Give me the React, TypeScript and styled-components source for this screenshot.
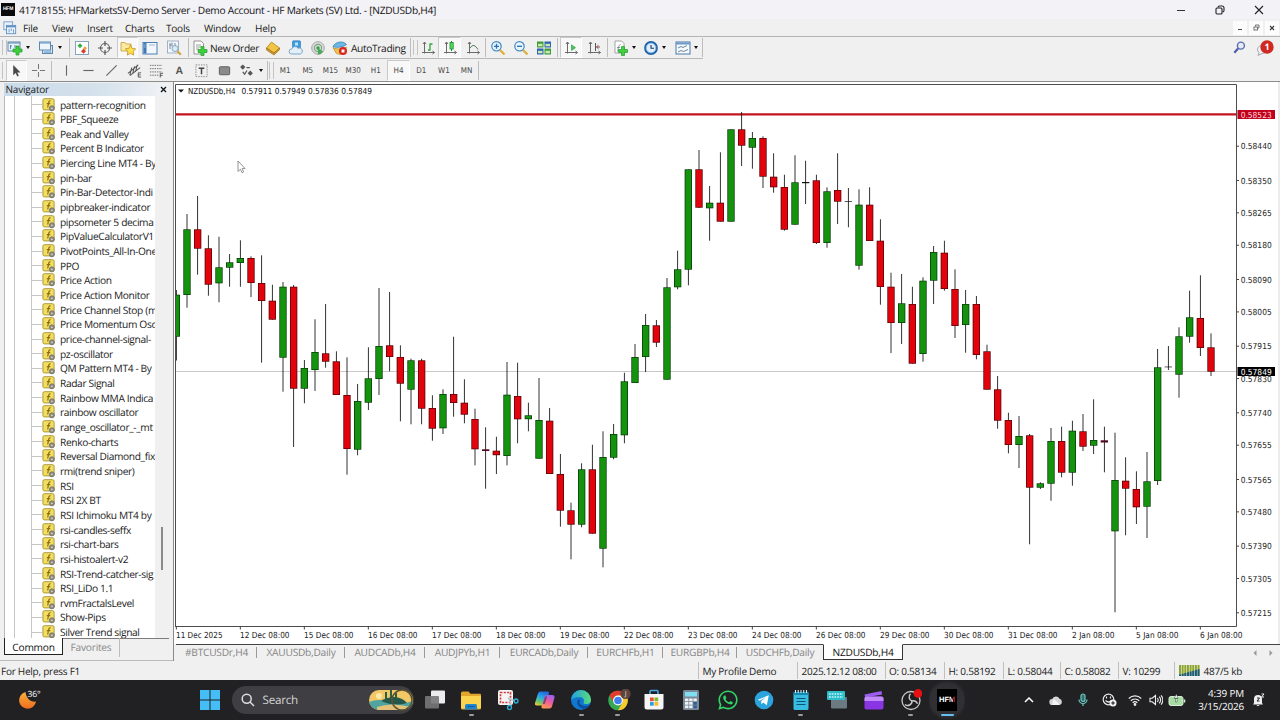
import React from "react";
import styled, { createGlobalStyle, css } from "styled-components";
import { FaWhatsapp } from "react-icons/fa";

const UI = `"Open Sans", "Noto Sans", sans-serif`;
const TAHOMA = `"DejaVu Sans Condensed", "DejaVu Sans", sans-serif`;

const GlobalStyle = createGlobalStyle`
  html, body { margin: 0; padding: 0; background: #f0f0f0; }
  * { box-sizing: border-box; }
  svg { display: block; flex: none; }
`;

const Screen = styled.div`
  width: 1280px;
  height: 720px;
  display: flex;
  flex-direction: column;
  overflow: hidden;
  background: #f0f0f0;
  font-family: ${UI};
  font-size: 10px;
  letter-spacing: -0.2px;
  text-rendering: geometricPrecision;
  color: #1a1a1a;
  white-space: nowrap;
`;

/* ---------- title and menu ---------- */

const TitleBar = styled.header`
  height: 19px;
  display: flex;
  align-items: center;
  background: #f3f2f6;
  padding: 0 16.5px 0 1px;
`;
const TitleLogo = styled.div`
  width: 14px;
  height: 13px;
  background: #0b0b0b;
  color: #fff;
  font: bold 5px/13px "Liberation Sans", sans-serif;
  text-align: center;
  margin-right: 4px;
`;
const TitleText = styled.div`
  flex: 1;
  font-size: 10.2px;
  letter-spacing: -0.27px;
  color: #111;
`;
const WindowButtons = styled.div`
  display: flex;
  gap: 29px;
`;
const MenuBar = styled.nav`
  height: 17px;
  display: flex;
  align-items: center;
  padding-left: 3px;
`;
const MenuItem = styled.div<{ $w: number }>`
  width: ${(p) => p.$w}px;
`;
const MdiButtons = styled.div`
  margin-left: auto;
  display: flex;
  gap: 2px;
  padding-right: 1px;
`;
const MdiButton = styled.div`
  width: 14px;
  height: 14px;
  background: #fcfcfc;
  display: grid;
  place-items: center;
`;

/* ---------- toolbars ---------- */

const ToolbarArea = styled.div`
  height: 46px;
  border-top: 1px solid #b4b4b4;
  border-bottom: 1px solid #8c8c8c;
  display: flex;
  justify-content: space-between;
  padding-right: 5px;
`;
const Toolbar = styled.div<{ $h: number; $bottom?: boolean }>`
  height: ${(p) => p.$h}px;
  display: flex;
  align-items: center;
  width: max-content;
  border-bottom: ${(p) => (p.$bottom ? "1px solid #b8b8b8" : "0")};
`;
const Grip = styled.div`
  width: 6px;
  align-self: stretch;
  padding: 3px 0 3px 1.5px;
  &::before {
    content: "";
    display: block;
    width: 3px;
    height: 100%;
    border-left: 1px solid #c4c4c4;
    border-right: 1px solid #c4c4c4;
  }
`;
const Slot = styled.div<{ $w: number; $active?: boolean }>`
  width: ${(p) => p.$w}px;
  height: 21px;
  display: flex;
  align-items: center;
  justify-content: center;
  ${(p) =>
    p.$active &&
    css`
      background: #f8f8f8;
      border: 1px solid #c9c9c9;
      border-right-color: #fff;
      border-bottom-color: #fff;
    `}
`;
const Sep = styled.div<{ $l: number; $r: number }>`
  width: 1px;
  height: 19px;
  background: #bdbdbd;
  margin: 0 ${(p) => p.$r}px 0 ${(p) => p.$l}px;
`;
const Drop = styled.div<{ $w: number; $r?: number }>`
  width: ${(p) => p.$w}px;
  margin-right: ${(p) => p.$r ?? 0}px;
  display: flex;
  justify-content: center;
  &::before {
    content: "";
    border: 2.5px solid transparent;
    border-top: 3px solid #111;
    border-bottom: 0;
  }
`;
const ToolLabel = styled.div<{ $w: number; $l?: number }>`
  width: ${(p) => p.$w}px;
  padding-left: ${(p) => p.$l ?? 0}px;
  font-size: 10.2px;
  letter-spacing: -0.35px;
`;
const Period = styled(Slot)`
  font: 8px ${TAHOMA};
  letter-spacing: 0;
  color: #4a4a4a;
`;
const ToolbarRight = styled.div`
  display: flex;
  gap: 8.5px;
  padding-top: 3px;
`;

/* ---------- main area ---------- */

const Main = styled.main`
  height: 579px;
  display: flex;
`;
const Navigator = styled.aside`
  width: 173px;
  display: flex;
  flex-direction: column;
  padding: 1px 4px 0 4px;
  border-bottom: 1px solid #bcbcbc;
`;
const NavHeader = styled.div`
  height: 13px;
  display: flex;
  align-items: center;
  justify-content: space-between;
  padding: 0 2px 0 1.5px;
  background: linear-gradient(90deg, #c9dbe9, #d6e2ec 60%, #eff2f5 96%);
  line-height: 13px;
`;
const NavBody = styled.div`
  height: 543px;
  display: flex;
  background: #fff;
  border-left: 1px solid #b9b9b9;
  border-bottom: 1px solid #7c7c7c;
`;
const Guide = styled.div<{ $w: number }>`
  width: ${(p) => p.$w}px;
  border-right: 1px solid #c6c6c6;
`;
const Tree = styled.ul`
  flex: 1;
  min-width: 0;
  margin: 0;
  padding: 1.2px 0 0;
  list-style: none;
  overflow: hidden;
`;
const TreeRow = styled.li`
  height: 14.667px;
  display: flex;
  align-items: center;
  font-size: 10.2px;
  letter-spacing: -0.36px;
  overflow: hidden;
  &::before {
    content: "";
    flex: none;
    width: 10px;
    border-top: 1px solid #c6c6c6;
  }
  svg { margin-right: 4px; }
`;
const Scroll = styled.div`
  width: 14px;
  flex: none;
  background: #f0f0f0;
  padding: 431px 6px 0 6px;
  &::before {
    content: "";
    display: block;
    width: 2px;
    height: 43px;
    background: #8a8a8a;
  }
`;
const NavTabs = styled.div`
  display: flex;
  height: 17px;
  margin-top: -1px;
`;
const NavTab = styled.div<{ $active?: boolean }>`
  width: ${(p) => (p.$active ? 59 : 56)}px;
  line-height: 18px;
  text-align: center;
  font-size: 10.2px;
  letter-spacing: -0.25px;
  color: #8a8a8a;
  ${(p) =>
    p.$active &&
    css`
      color: #111;
      background: #fff;
      border: 1.5px solid #222;
      border-top: 0;
    `}
`;
const ChartPane = styled.section`
  flex: 1;
  display: flex;
  flex-direction: column;
  border-left: 1px solid #8a8a8a;
`;
const ChartWindow = styled.div`
  height: 562px;
  background: #fff;
  border-right: 2px solid #ececec;
  overflow: hidden;
`;
const ChartTabs = styled.div`
  height: 17px;
  display: flex;
  padding-left: 2px;
  background: #f0f0f0;
  align-items: flex-start;
`;
const ChartTab = styled.div<{ $w: number; $active?: boolean; $last?: boolean }>`
  width: ${(p) => p.$w}px;
  height: 16px;
  line-height: 15px;
  text-align: center;
  font-size: 10.2px;
  color: #858585;
  letter-spacing: -0.25px;
  border-top: 1px solid #444;
  position: relative;
  &::after {
    content: "";
    display: ${(p) => (p.$active || p.$last ? "none" : "block")};
    position: absolute;
    right: 0;
    top: 2px;
    height: 11px;
    border-right: 1px solid #9a9a9a;
  }
  ${(p) =>
    p.$active &&
    css`
      color: #111;
      background: #fff;
      border: 1px solid #333;
      border-top-color: #fff;
    `}
`;
const TabFiller = styled.div`
  flex: 1;
  height: 16px;
  border-top: 1px solid #444;
  display: flex;
  justify-content: flex-end;
  align-items: center;
  gap: 12px;
  padding-right: 7px;
`;

/* ---------- status bar ---------- */

const StatusBar = styled.footer`
  height: 19px;
  display: flex;
  align-items: center;
  color: #222;
  padding-left: 1px;
`;
const StatusCell = styled.div<{ $w: number; $first?: boolean }>`
  width: ${(p) => p.$w}px;
  height: 17px;
  padding-top: 1.5px;
  display: flex;
  align-items: center;
  gap: 4px;
  letter-spacing: -0.25px;
  border-left: ${(p) => (p.$first ? "0" : "1px solid #c0c0c0")};
  padding-left: ${(p) => (p.$first ? 0 : 3.5)}px;
`;

/* ---------- taskbar ---------- */

const Taskbar = styled.div`
  height: 40px;
  background: #212124;
  display: flex;
  align-items: center;
  color: #fff;
`;
const Weather = styled.div`
  width: 192px;
  padding-left: 18px;
`;
const StartButton = styled.div`
  width: 40px;
  display: flex;
  padding-left: 8px;
`;
const SearchBox = styled.div`
  width: 182px;
  height: 28px;
  border-radius: 14px;
  background: #3f3f43;
  display: flex;
  align-items: center;
  padding: 0 1px 0 9px;
  font-size: 11.7px;
  color: #d4d4d4;
  margin-right: 2.5px;
  span { flex: 1; padding-left: 7.5px; letter-spacing: -0.25px; }
`;
const TaskApp = styled.div<{ $active?: boolean; $dot?: boolean }>`
  width: 36.6px;
  height: 40px;
  display: flex;
  flex-direction: column;
  align-items: center;
  justify-content: center;
  padding-top: 5px;
  ${(p) => p.$active && css`background: radial-gradient(circle, #303034 0 60%, #212124 75%);`}
  &::after {
    content: "";
    width: ${(p) => (p.$active ? 13 : 5)}px;
    height: 2px;
    margin-top: 3px;
    border-radius: 1px;
    flex: none;
    background: ${(p) => (p.$active ? "#66bff0" : p.$dot ? "#9b9b9b" : "transparent")};
  }
`;
const HfmTile = styled.div`
  width: 20px;
  height: 22px;
  background: #000;
  font: bold 7.6px/22px "Liberation Sans", sans-serif;
  letter-spacing: -0.1px;
  text-align: center;
  flex: none;
  i { font-style: normal; background: linear-gradient(90deg, #fff 70%, #d81e2c 72%); background-clip: text; color: transparent; }
`;
const Tray = styled.div`
  margin-left: auto;
  display: flex;
  align-items: center;
  padding-right: 15px;
`;
const TraySlot = styled.div<{ $w: number }>`
  width: ${(p) => p.$w}px;
  display: flex;
  justify-content: center;
`;
const Clock = styled.div`
  width: 54px;
  text-align: right;
  font-size: 9.9px;
  letter-spacing: -0.12px;
  line-height: 13.5px;
  margin-right: 8px;
`;

/* ---------- icons ---------- */

const Ico = ({ s = 16, children }: { s?: number; children: React.ReactNode }) => (
  <svg width={s} height={s} viewBox="0 0 16 16" fill="none">
    {children}
  </svg>
);
const Plus = ({ x, y }: { x: number; y: number }) => (
  <path
    d={`M${x + 3} ${y}h3v3h3v3h-3v3h-3v-3h-3v-3h3z`}
    fill="#3fd03f"
    stroke="#1f9a2a"
    strokeWidth=".7"
  />
);
const NewChart = () => (
  <Ico>
    <rect x="1" y="2" width="12" height="9" fill="#eaf3fb" stroke="#5c88ae" />
    <path d="M1 3h12M3.5 5v4M3 6h2M8 5v3" stroke="#5c88ae" strokeWidth="1" />
    <Plus x={6} y={6} />
  </Ico>
);
const Profiles = () => (
  <Ico>
    <rect x="4.5" y="5.5" width="10" height="8" fill="#cfe3f3" stroke="#5c88ae" />
    <rect x="1.5" y="2" width="11" height="8" fill="#eef6fc" stroke="#5c88ae" />
    <path d="M2 3h10M6 12h7" stroke="#5b94c8" />
  </Ico>
);
const MarketWatch = () => (
  <Ico>
    <rect x="1.5" y="1.5" width="13" height="13" fill="#fff" stroke="#86a3bf" />
    <path d="M6 3.200 8.500 5.700 6 8.200 3.500 5.700z" fill="#35b045" />
    <path d="M11 6.300 13 8.300 11 10.300 9 8.300z" fill="#e9a13c" />
    <path d="M9.500 8.700 12 11.200 9.500 13.700 7 11.200z" fill="#dd3a2c" />
  </Ico>
);
const Target = () => (
  <Ico>
    <circle cx="8" cy="8" r="4.500" stroke="#666" strokeWidth="1.200" />
    <path d="M8 1v5M8 10v5M1 8h5M10 8h5" stroke="#555" strokeWidth="1.200" />
  </Ico>
);
const FolderStar = () => (
  <Ico>
    <path d="M1 2.500h4l1 1.500h5v7H1z" fill="#fbe9a0" stroke="#c49a36" strokeWidth=".8" />
    <path
      d="m10.500 5 1.600 3.400 3.600.5-2.600 2.500.6 3.700-3.200-1.800-3.200 1.800.6-3.700L5.300 8.900l3.600-.5z"
      fill="#ffe14a"
      stroke="#bf8f22"
      strokeWidth=".8"
    />
  </Ico>
);
const NavPanel = () => (
  <Ico>
    <rect x="1" y="2.500" width="14" height="11.500" fill="#f1f7fd" stroke="#4a7fb4" />
    <rect x="1.500" y="3" width="3" height="10.500" fill="#3f78b4" />
    <path d="M2.500 5h1M2.500 7h1" stroke="#dfeaf5" />
    <path d="M7 5h6" stroke="#9dbad4" />
  </Ico>
);
const Tester = () => (
  <Ico>
    <rect x="1.500" y="1" width="11" height="12" fill="#f3f7fb" stroke="#9fb2c6" />
    <path d="M4 3v6M6 2.500v4M9 3v4M3.500 5h2" stroke="#6c8296" strokeWidth=".9" />
    <circle cx="9" cy="8.500" r="3" fill="#d6ecfa" stroke="#8aa6bd" />
    <path d="m11.300 11 3.500 3.800" stroke="#d3a33b" strokeWidth="2" />
  </Ico>
);
const OrderIcon = () => (
  <Ico>
    <path d="M2 1h7l2.500 2.500V14H2z" fill="#fff" stroke="#888" strokeWidth=".9" />
    <path d="M4 5h5M4 7h5M4 9h3" stroke="#8a9a8a" strokeWidth=".9" />
    <Plus x={6} y={6.500} />
  </Ico>
);
const Book = () => (
  <Ico>
    <path d="m6.500 2 8 6-5.500 5L1.500 8z" fill="#f1c443" stroke="#b08424" strokeWidth=".8" />
    <path d="m1.500 8 7.500 5 5.500-5v1.800L9 15 1.500 10z" fill="#d79a28" stroke="#8d671a" strokeWidth=".6" />
  </Ico>
);
const CloudUser = () => (
  <Ico>
    <rect x="4.500" y=".8" width="8" height="8" rx="1" fill="#3b9ae0" stroke="#2676b8" strokeWidth=".6" />
    <path d="M7 2.500h3v3H7z" fill="#bfe2f8" />
    <path
      d="M3.500 14a2.500 2.500 0 0 1 .2-5 3.500 3.500 0 0 1 6.300-.8 3 3 0 0 1 2.500 5.800z"
      fill="#e4eef7"
      stroke="#6f9dc4"
      strokeWidth=".9"
    />
  </Ico>
);
const Signal = () => (
  <Ico>
    <circle cx="8" cy="8" r="6.300" fill="#dcdcdc" stroke="#a2a8a2" />
    <circle cx="8" cy="8" r="3.600" stroke="#7fa486" strokeWidth="1.200" />
    <circle cx="8" cy="8" r="1.700" fill="#2f9c46" />
    <path d="M8 8v6.500a6.500 6.500 0 0 0 5-3z" fill="#43ab55" />
  </Ico>
);
const AutoTrade = () => (
  <Ico>
    <path d="M1 7.500c3 2 11 2 13.500-.5L12 12.500c-3 2.500-6 2-8 .5z" fill="#f0c54c" stroke="#b6892a" strokeWidth=".7" />
    <path d="M1 6.500C3 2 11 0 14.500 4.500 11 7.500 4 8 1 6.500z" fill="#6cb8e6" stroke="#2e78ae" strokeWidth=".7" />
    <circle cx="11" cy="11" r="4" fill="#d8261f" />
    <rect x="9.500" y="9.500" width="3" height="3" fill="#fff" />
  </Ico>
);
const axes = "M4.500 2v11.500M2 12.500h12.500M3 4l1.500-2L6 4M12.500 11l2 1.500-2 1.500";
const BarsIcon = () => (
  <Ico>
    <path d={axes} stroke="#6a6a6a" />
    <path d="M10 3.500v7M10 4h2.500M8 10h2" stroke="#2fa53c" strokeWidth="1.300" />
  </Ico>
);
const CandleIcon = () => (
  <Ico>
    <path d={axes} stroke="#6a6a6a" />
    <path d="M9.500 1v10" stroke="#1e8c2c" />
    <rect x="8" y="2.500" width="3.200" height="6.500" fill="#4edb5c" stroke="#1e8c2c" strokeWidth=".8" />
  </Ico>
);
const LineIcon = () => (
  <Ico>
    <path d={axes} stroke="#6a6a6a" />
    <path d="M5 8c3-4 5-3 8 1.500" stroke="#4f7d5a" />
  </Ico>
);
const Zoom = ({ plus }: { plus?: boolean }) => (
  <Ico>
    <path d="m10 10 4.500 4.500" stroke="#dcb13f" strokeWidth="2.400" />
    <circle cx="6.500" cy="6.300" r="4.700" fill="#e6f4fd" stroke="#3f86c2" strokeWidth="1.200" />
    <path d={plus ? "M4 6.300h5M6.500 3.800v5" : "M4 6.300h5"} stroke="#2b6fb0" strokeWidth="1.300" />
  </Ico>
);
const Tiles = () => (
  <Ico>
    {[
      [1, 1.5, "#3f9b3a"],
      [8.5, 1.5, "#2b63b0"],
      [1, 8.5, "#2b63b0"],
      [8.5, 8.5, "#3f9b3a"],
    ].map(([x, y, c]) => (
      <g key={`${x}${y}`}>
        <rect x={x} y={y} width="6.500" height="6" fill={c as string} />
        <rect x={Number(x) + 1} y={Number(y) + 2.3} width="4.500" height="2.500" fill="#c6ecae" />
      </g>
    ))}
  </Ico>
);
const Scroller = () => (
  <Ico>
    <path d={axes} stroke="#6a6a6a" />
    <path d="m8.500 4.800 4 2.900-4 2.800z" fill="#49c455" stroke="#269a35" strokeWidth=".6" />
  </Ico>
);
const Shift = () => (
  <Ico>
    <path d={axes} stroke="#6a6a6a" />
    <path d="M9.500 3v8" stroke="#555" />
    <path d="M14 7h-3.500M12.500 5.200 10.500 7l2 1.800" stroke="#8a4a44" />
  </Ico>
);
const Indicators = () => (
  <Ico>
    <path d="M3 1h6.500L12 3.500V13H3z" fill="#fff" stroke="#999" strokeWidth=".9" />
    <path d="M5 11.500c1.500 0 1-7 3.500-7M5 7.500h3" stroke="#789" strokeWidth=".9" />
    <Plus x={6.500} y={6.500} />
  </Ico>
);
const ClockIcon = () => (
  <Ico>
    <circle cx="8" cy="8" r="6.900" fill="#1f5fa8" />
    <circle cx="8" cy="8" r="4.900" fill="#dff0fc" stroke="#6ab0e4" strokeWidth=".8" />
    <path d="M8 5v3.200h3" stroke="#234" strokeWidth="1.100" />
  </Ico>
);
const Template = () => (
  <Ico>
    <rect x="1" y="2" width="14" height="12" fill="#f7fbff" stroke="#4a79a6" />
    <path d="M1 3.500h14" stroke="#6a9acb" strokeWidth="2" />
    <path d="m3 8 3-1.500 2 1 4-2M3 12l3-1.500 2.500 1L13 9.500" stroke="#57788f" strokeWidth=".9" />
  </Ico>
);
const Cursor = () => (
  <Ico s={15}>
    <path d="M4.500 2v11l2.600-2.400 1.700 3.700 1.700-.8-1.700-3.500h3.500z" fill="#4a4a4a" />
  </Ico>
);
const CrossHair = () => (
  <Ico s={15}>
    <path d="M8 1v5.500M8 9.500V15M1 8h5.500M9.500 8H15" stroke="#777" strokeWidth="1.100" />
  </Ico>
);
const Stroke = ({ d }: { d: string }) => (
  <Ico s={15}>
    <path d={d} stroke="#666" strokeWidth="1.200" />
  </Ico>
);
const Channel = () => (
  <Ico s={15}>
    <path d="M1 11 12 2M3 13.500 14 5M5 5l-2 8M8 3.500l-2 8M11 2l-2 7.500" stroke="#555" strokeWidth="1.100" />
    <path d="M15 10.500h-3v4.500h3M12 12.700h2.500" stroke="#444" strokeWidth=".9" />
  </Ico>
);
const Fibo = () => (
  <Ico s={15}>
    <path d="M1 2.500h13M1 6h13M1 9.500h13M1 13h9" stroke="#666" strokeDasharray="1.500 1" />
    <path d="M15 11h-3v4.500M12 13.200h2.500" stroke="#444" strokeWidth=".9" />
  </Ico>
);
const TextTool = styled.b`
  font: bold 10.5px "Liberation Sans", sans-serif;
  color: #555;
`;
const LabelTool = () => (
  <Ico s={15}>
    <rect x="2" y="2" width="12" height="12.500" stroke="#888" strokeDasharray="1.500 1.200" />
    <path d="M5 5.500h6M8 5.500V12" stroke="#444" strokeWidth="1.600" />
  </Ico>
);
const BoxTool = () => (
  <Ico s={15}>
    <rect x="2.500" y="4" width="11" height="8.500" rx="1" fill="#8a8a8a" stroke="#5a5a5a" />
  </Ico>
);
const ArrowsTool = () => (
  <Ico s={15}>
    <path d="m4 1.500 2.800 2.800L4 7.200 1.200 4.300z" fill="#555" />
    <path d="m12 8 2.800 2.800L12 13.600l-2.800-2.800z" fill="#555" />
    <path d="m4 9.500 2 2.500 2.500-4M8 5h3.500" stroke="#555" strokeWidth="1.300" />
  </Ico>
);
const ScriptIcon = () => (
  <svg width="14" height="14" viewBox="0 0 14 14">
    <rect x=".9" y=".7" width="11.200" height="11.200" rx="1.500" fill="#f2de62" stroke="#a58f2c" strokeWidth=".9" />
    <path d="M8.600 2.800C7 2.400 6.800 4 6.500 5.500L5.700 9.500M4.800 5.600h3.500" stroke="#8a6d10" strokeWidth="1.200" fill="none" />
    <circle cx="9.900" cy="10.300" r="2.600" fill="#8d8a80" stroke="#6c6a62" strokeWidth=".6" />
    <circle cx="9.900" cy="10.300" r=".9" fill="#d8d4c0" />
  </svg>
);

/* ---------- chart data: [direction, high, open/close top, open/close bottom, low] ---------- */

type Candle = [string, number, number, number, number];
const CANDLES: Candle[] = [
  ["g", 290, 294.7, 336.7, 360.5], ["g", 214, 229.3, 295, 307.7], ["r", 196, 229.3, 248.7, 274.7],
  ["r", 235.3, 248.3, 284.7, 295.7], ["g", 236.7, 267.3, 283.3, 302.3], ["g", 254, 262.3, 267.7, 286.7],
  ["g", 240.3, 258, 263, 286.7], ["r", 256.3, 258, 283, 297], ["r", 255.3, 283, 301, 362.7],
  ["r", 284.7, 300.7, 319.7, 319.7], ["g", 282, 286.7, 357.7, 391.7], ["r", 285, 286.7, 388.7, 447],
  ["g", 360, 368, 388.7, 403.3], ["g", 319.3, 352, 370, 391], ["r", 304, 353.3, 361.7, 367.7],
  ["r", 351.3, 361.3, 395, 395], ["r", 357.3, 395, 449, 474.7], ["g", 384, 401, 449.7, 455.3],
  ["g", 347.3, 378.3, 402.7, 410], ["g", 288, 346, 379, 395], ["r", 292, 345.3, 357, 371.3],
  ["r", 345.3, 357, 383.7, 421.3], ["g", 358.7, 360.3, 389.7, 424.3], ["r", 358.7, 360.3, 408.7, 424.3],
  ["r", 395.3, 408, 428.7, 440.7], ["g", 389.3, 394, 428.3, 434], ["r", 336.7, 394, 403, 416.7],
  ["r", 379.3, 402.7, 414.7, 423.3], ["r", 408.7, 419, 449.3, 465.3], ["d", 427.3, 449.3, 451, 488.7],
  ["r", 436.7, 450.7, 455.2, 474], ["g", 362, 394.7, 456, 465.3], ["r", 362.7, 396, 419.3, 443.3],
  ["g", 402.7, 415.3, 419.2, 431.3], ["g", 378, 420, 458.7, 458.7], ["r", 408, 420.7, 474, 474],
  ["r", 454, 474, 510.7, 526.7], ["r", 502.7, 510.3, 524.7, 559.3], ["g", 463.3, 469.3, 524.7, 527.3],
  ["r", 444.7, 469.3, 533.7, 533.7], ["g", 431.3, 457, 548.7, 567.3], ["g", 424, 434, 457.7, 459.3],
  ["g", 372.7, 381.3, 435.3, 443.3], ["g", 344, 357, 383, 383], ["g", 314, 325, 357, 372],
  ["r", 320, 325.3, 342.7, 347], ["g", 278, 287.3, 379.7, 379.7], ["g", 250.7, 269.3, 287.3, 289.3],
  ["g", 169.3, 169.3, 269.7, 285.3], ["r", 150, 169.3, 207.7, 208], ["g", 186, 202.7, 208.3, 240.7],
  ["r", 152.3, 202.7, 221.7, 221.7], ["g", 129.3, 129.3, 221.7, 221.7], ["r", 112, 129.3, 145.7, 166],
  ["g", 132, 138, 147.7, 168.7], ["r", 136.3, 138, 176.7, 188], ["r", 153.3, 176.7, 187.3, 192.7],
  ["r", 174.7, 187, 229.7, 230.7], ["g", 155.3, 182.3, 224.7, 224.7], ["k", 160.7, 182, 183.2, 204],
  ["r", 174.7, 180.3, 243, 244], ["g", 187.3, 191.3, 243, 247.7], ["r", 153.3, 190, 201.7, 224],
  ["k", 188, 201.2, 201.9, 227.3], ["g", 189.3, 204.7, 265.7, 269.7], ["r", 187.3, 204.7, 241, 241],
  ["r", 219.3, 240.7, 287, 304.7], ["r", 272.7, 286.7, 323, 353], ["g", 274, 303.3, 323, 344],
  ["r", 286.7, 304, 363.7, 363.7], ["g", 277.3, 280.7, 354, 361.7], ["g", 246, 252, 280.7, 304],
  ["r", 240.7, 252.7, 289, 290.7], ["r", 269.3, 289, 326, 338], ["g", 290, 304, 325, 352.7],
  ["r", 296, 304, 355, 359.3], ["r", 344.7, 351.3, 389.7, 389.7], ["r", 376, 389.3, 420.7, 428.7],
  ["r", 412.7, 420, 445, 453.3], ["g", 416, 436, 445, 468], ["r", 434, 435.3, 487.7, 544.3],
  ["g", 482.3, 483.3, 487.7, 489], ["g", 428, 441, 483.7, 500.7], ["r", 426.7, 441, 472.7, 477.3],
  ["g", 420.7, 430.7, 472.7, 485.7], ["r", 414, 431.3, 446.7, 451], ["g", 399.3, 440, 445.7, 454],
  ["d", 426.7, 440.3, 442.5, 472.3], ["g", 432.7, 480, 531.3, 612.3], ["r", 457.3, 480.7, 488.7, 535.3],
  ["r", 471.3, 489, 507.3, 524], ["g", 452, 481.3, 506.7, 538], ["g", 349, 367.3, 481, 485],
  ["k", 346, 366.6, 367.3, 370], ["g", 327.3, 336.3, 374.7, 397.7], ["g", 290.7, 317.3, 336.7, 342.7],
  ["r", 275.3, 318, 348, 356], ["r", 333.3, 347.3, 371.7, 376],
];
const FILL: Record<string, string> = { g: "#15930f", r: "#e1040c" };
const EDGE: Record<string, string> = { g: "#063f06", r: "#5c0206", d: "#4d0820", k: "#111" };

const PRICES = [
  "0.58440", "0.58350", "0.58265", "0.58180", "0.58090", "0.58005", "0.57915", "0.57830",
  "0.57740", "0.57655", "0.57565", "0.57480", "0.57390", "0.57305", "0.57215",
];
const DATES = [
  "11 Dec 2025", "12 Dec 08:00", "15 Dec 08:00", "16 Dec 08:00", "17 Dec 08:00", "18 Dec 08:00",
  "19 Dec 08:00", "22 Dec 08:00", "23 Dec 08:00", "24 Dec 08:00", "26 Dec 08:00", "29 Dec 08:00",
  "30 Dec 08:00", "31 Dec 08:00", "2 Jan 08:00", "5 Jan 08:00", "6 Jan 08:00",
];
const priceY = (p: number) => 146.2 + ((0.5844 - p) / 0.01225) * 466.6;

const ChartText = styled.text`
  font-family: ${TAHOMA};
  font-size: 8.4px;
  letter-spacing: 0;
`;

const PriceChart = () => (
  <svg width="1104" height="562" viewBox="174 82 1104 562">
    <path d="M175.500 627V84.500H1236.500V626.500H175.500" fill="none" stroke="#4c4c4c" />
    <path d="M176 371.500H1236" stroke="#c8c8c8" />
    <path d="M176 114.400H1236" stroke="#c41420" strokeWidth="2.200" />
    <clipPath id="plot">
      <rect x="176" y="85" width="1060" height="541" />
    </clipPath>
    <g clipPath="url(#plot)">
      {CANDLES.map(([kind, high, top, bottom, low], i) => {
        const x = 176.33 + i * 10.6667;
        return (
          <g key={i}>
            <rect x={x - 0.4} y={high} width="0.8" height={low - high} fill="#000" />
            <rect x={x - 3.67} y={top} width="7.33" height={bottom - top} fill={EDGE[kind]} />
            {FILL[kind] && (
              <rect x={x - 2.9} y={top + 0.75} width="5.8" height={bottom - top - 1.5} fill={FILL[kind]} />
            )}
          </g>
        );
      })}
    </g>
    <path d="M178 89.500h6l-3 3z" fill="#111" />
    <ChartText x="188" y="94" textLength="47.500" lengthAdjust="spacingAndGlyphs" fill="#111">NZDUSDb,H4</ChartText>
    <ChartText x="241.500" y="94" textLength="130.500" lengthAdjust="spacingAndGlyphs" fill="#111">
      0.57911 0.57949 0.57836 0.57849
    </ChartText>
    {PRICES.map((p) => (
      <g key={p}>
        <path d={`M1237 ${priceY(+p)}h2`} stroke="#444" />
        <ChartText x="1240.700" y={priceY(+p) + 3.1} textLength="31" lengthAdjust="spacingAndGlyphs" fill="#222">{p}</ChartText>
      </g>
    ))}
    <rect x="1237.500" y="110" width="37.500" height="9" fill="#c2001c" />
    <ChartText x="1240.700" y="117.600" textLength="31" lengthAdjust="spacingAndGlyphs" fill="#fbd5d8">0.58523</ChartText>
    <rect x="1237.500" y="367" width="37.500" height="9" fill="#000" />
    <ChartText x="1240.700" y="374.700" textLength="31" lengthAdjust="spacingAndGlyphs" fill="#fff">0.57849</ChartText>
    {DATES.map((d, i) => {
      const x = 176.33 + i * 64;
      return (
        <g key={d}>
          <path d={`M${x} 627v2.500`} stroke="#444" />
          <ChartText
            x={x - 0.3}
            y="637.500"
            textLength={i === 0 ? 46.5 : d.length === 12 ? 49.5 : 42.5}
            lengthAdjust="spacingAndGlyphs"
            fill="#222"
          >
            {d}
          </ChartText>
        </g>
      );
    })}
    <path d="M238 161v10.500l2.400-2.200 1.600 3.400 1.600-.8-1.500-3.300h3z" fill="#fff" stroke="#777" strokeWidth=".8" />
  </svg>
);

const INDICATORS = [
  "pattern-recognition", "PBF_Squeeze", "Peak and Valley", "Percent B Indicator",
  "Piercing Line MT4 - By", "pin-bar", "Pin-Bar-Detector-Indi", "pipbreaker-indicator",
  "pipsometer 5 decima", "PipValueCalculatorV1", "PivotPoints_All-In-One", "PPO", "Price Action",
  "Price Action Monitor", "Price Channel Stop (m", "Price Momentum Osc",
  "price-channel-signal-", "pz-oscillator", "QM Pattern MT4 - By", "Radar Signal",
  "Rainbow MMA Indica", "rainbow oscillator", "range_oscillator_-_mt", "Renko-charts",
  "Reversal Diamond_fix", "rmi(trend sniper)", "RSI", "RSI 2X BT", "RSI Ichimoku MT4 by",
  "rsi-candles-seffx", "rsi-chart-bars", "rsi-histoalert-v2", "RSI-Trend-catcher-sig",
  "RSI_LiDo 1.1", "rvmFractalsLevel", "Show-Pips", "Silver Trend signal",
];
const MENUS: [string, number][] = [
  ["File", 29], ["View", 35], ["Insert", 38], ["Charts", 41], ["Tools", 38], ["Window", 51], ["Help", 40],
];
const TABS: [string, number][] = [
  ["#BTCUSDr,H4", 81], ["XAUUSDb,Daily", 88], ["AUDCADb,H4", 80], ["AUDJPYb,H1", 75],
  ["EURCADb,Daily", 88], ["EURCHFb,H1", 75], ["EURGBPb,H4", 74], ["USDCHFb,Daily", 86],
];
const STATUS: [string, number][] = [
  ["My Profile Demo", 99], ["2025.12.12 08:00", 87.500], ["O: 0.58134", 59.500], ["H: 0.58192", 59],
  ["L: 0.58044", 57], ["C: 0.58082", 58], ["V: 10299", 56],
];
const PERIODS = ["M1", "M5", "M15", "M30", "H1", "H4", "D1", "W1", "MN"];

/* ---------- taskbar drawings ---------- */

const T = ({ children }: { children: React.ReactNode }) => (
  <svg width="22" height="22" viewBox="0 0 22 22" fill="none">
    {children}
  </svg>
);
const TaskView = () => (
  <T>
    <rect x="7" y="1.500" width="14" height="13" rx="1" fill="#ececec" />
    <rect x="1" y="7" width="14" height="12.500" rx="1" fill="#77777a" opacity=".9" />
  </T>
);
const Explorer = () => (
  <T>
    <path d="M1 4q0-1.500 1.500-1.500h6l2 2.200H20q1 0 1 1V19q0 1.500-1.500 1.500h-17Q1 20.500 1 19z" fill="#e2a42b" />
    <path d="M1 7h20v11.500q0 1-1 1H2q-1 0-1-1z" fill="#fbd34e" />
    <path d="M5 20.500v-4q0-1.500 1.500-1.500h9q1.500 0 1.500 1.500v4z" fill="#1f86cf" />
    <path d="M7.500 17.500h7" stroke="#0d5ba0" strokeWidth="1.200" />
  </T>
);
const Snip = () => (
  <T>
    <rect x="1" y="1" width="15" height="15" rx="2" fill="#f4f4f4" />
    <rect x="3.500" y="3.500" width="10" height="10" stroke="#d13a3a" strokeWidth="1.700" strokeDasharray="2 1.300" />
    <path d="m11 9 7 3M12 9l2 8" stroke="#b9c7d0" strokeWidth="1.500" />
    <circle cx="19" cy="12" r="2" stroke="#2db0d8" strokeWidth="1.300" />
    <circle cx="12.500" cy="18.500" r="2" stroke="#2db0d8" strokeWidth="1.300" />
  </T>
);
const Copilot = () => (
  <T>
    <defs>
      <linearGradient id="cpa" x1="0.6" y1="0" x2="0.2" y2="1">
        <stop offset="0" stopColor="#2468e0" />
        <stop offset=".4" stopColor="#28a8e8" />
        <stop offset=".75" stopColor="#6cc86a" />
        <stop offset="1" stopColor="#f0c83c" />
      </linearGradient>
      <linearGradient id="cpb" x1=".7" y1="0" x2=".3" y2="1">
        <stop offset="0" stopColor="#9a62f0" />
        <stop offset=".5" stopColor="#ee5c9c" />
        <stop offset="1" stopColor="#ff9a4a" />
      </linearGradient>
    </defs>
    <path d="M6.500 2.500h7q2 0 1.500 2L12 14.500q-.6 2-2.500 2H3q-2.500 0-2-2.500L4 4.500q.600-2 2.500-2z" fill="url(#cpa)" />
    <path d="M13.500 6H18q3 0 2.500 2.500L18 17.500q-.6 2-2.500 2H9q-2 0-1.500-2L10.500 8q.6-2 3-2z" fill="url(#cpb)" />
    <path d="M11 7.500h2.200l-2.400 7.500H8.700z" fill="#2c2350" opacity=".55" />
  </T>
);
const Edge = () => (
  <T>
    <defs>
      <linearGradient id="edg" x1="0" y1="0" x2="1" y2="0">
        <stop offset="0" stopColor="#1f9fe6" />
        <stop offset="1" stopColor="#5bdc78" />
      </linearGradient>
    </defs>
    <circle cx="11" cy="11" r="10" fill="#1277cf" />
    <path d="M1 11A10 10 0 0 1 21 11c0 3.500-3.500 4.500-6 4-2.500-.5-1-2-1-3.500 0-2-2-3.500-4.500-3.500C5 8 2 9.500 1 11z" fill="url(#edg)" />
    <path d="M8 10.500c-2.500 4 1 9 6 9.500 2.500-.3 4.500-2 5.500-3.800-3.500 1.500-8 .8-9.500-1.700-.8-1.500-.2-3 .5-3.800z" fill="#0b4f9e" />
  </T>
);
const Chrome = () => (
  <svg width="26" height="22" viewBox="-2 0 26 22">
    <circle cx="11" cy="11.500" r="9.800" fill="#36a852" />
    <path d="M2.500 6.600A9.800 9.800 0 0 1 19.500 6.600H11A4.900 4.900 0 0 0 6.800 14z" fill="#e33b2e" />
    <path d="M11 6.600h8.500A9.800 9.800 0 0 1 11 21.300l4.500-7.500z" fill="#fbc92e" />
    <circle cx="11" cy="11.500" r="4.900" fill="#fff" />
    <circle cx="11" cy="11.500" r="3.800" fill="#3f80ee" />
    <circle cx="18.500" cy="4.800" r="5.200" fill="#5d453e" />
    <text x="18.500" y="7.300" textAnchor="middle" fontSize="7" fill="#e8ddd8" fontFamily="Open Sans">J</text>
  </svg>
);
const Store = () => (
  <T>
    <path d="M7 5V2.500q0-1 1-1h6q1 0 1 1V5" stroke="#48a9e6" strokeWidth="1.600" />
    <path d="M1.500 5h19v13q0 2.500-2.500 2.500H4Q1.500 20.500 1.500 18z" fill="#f5f5f5" />
    <path d="M7 8.500h3.700v3.700H7z" fill="#e8502a" />
    <path d="M11.500 8.500h3.700v3.700h-3.700z" fill="#7fba2a" />
    <path d="M7 13h3.700v3.700H7z" fill="#2a9fe8" />
    <path d="M11.500 13h3.700v3.700h-3.700z" fill="#fbbc2a" />
  </T>
);
const Calc = () => (
  <T>
    <rect x="3" y="1" width="16" height="20" rx="1.500" fill="#7b8896" />
    <rect x="5" y="3" width="12" height="4.500" fill="#7fdff0" />
    {[9.5, 13, 16.5].map((y) =>
      [5, 9.2, 13.4].map((x) => (
        <rect key={`${x}-${y}`} x={x} y={y} width="3.400" height="2.700" fill={x > 13 && y > 12 ? "#2b5f9e" : "#eef2f5"} />
      )),
    )}
  </T>
);
const Telegram = () => (
  <T>
    <circle cx="11" cy="11" r="9.300" fill="#2ba3dc" />
    <path d="m4.800 10.800 11-4.600-2 10-3.600-2.600-1.700 1.700-.4-3 5-4.300-6.300 3.800z" fill="#fff" />
  </T>
);
const Notepad = () => (
  <T>
    <rect x="3.500" y="3" width="15" height="18" rx="1.500" fill="#38bde2" />
    <path d="M3.500 3h15v3h-15z" fill="#1887ad" />
    <path d="M5.500 1v3M8.200 1v3M11 1v3M13.700 1v3M16.500 1v3" stroke="#c9f2fb" strokeWidth="1.100" />
    <path d="M6.500 9.500h9M6.500 12.500h9M6.500 15.500h9" stroke="#0d5575" strokeWidth="1.200" />
  </T>
);
const Keyboard = () => (
  <T>
    <rect x="5" y="8" width="16" height="11.500" rx="1" fill="#6c7a82" />
    <rect x="1" y="2" width="18" height="9" rx="1" fill="#2dbcc9" />
    <path d="M3 5h14M3 8h14" stroke="#c4f5f7" strokeWidth="1.300" strokeDasharray="1.700 1" />
  </T>
);
const Clapper = () => (
  <T>
    <path d="m1.500 5.500 17-3.500.7 3.500-17 3z" fill="#9d5cf0" />
    <rect x="1.500" y="7.500" width="19" height="13" rx="2" fill="#8a35e4" />
    <path d="M1.500 9.500q0-2 2-2h15q2 0 2 2v2.500h-19z" fill="#c28bfa" />
  </T>
);
const Obs = () => (
  <T>
    <circle cx="11" cy="11.500" r="9" fill="#1e1e20" stroke="#c9c9c9" strokeWidth="1.300" />
    <path d="M10.500 4.800a4.300 4.300 0 0 0 1.500 7.200M5 15.500a4.300 4.300 0 0 0 7-3.500M17.500 14.800a4.300 4.300 0 0 0-5.500-2.800" stroke="#c9c9c9" strokeWidth="1.500" />
    <circle cx="18" cy="4.500" r="4.400" fill="#e60f12" />
  </T>
);

export default function App() {
  return (
    <Screen>
      <GlobalStyle />
      <TitleBar>
        <TitleLogo>HFM</TitleLogo>
        <TitleText>41718155: HFMarketsSV-Demo Server - Demo Account - HF Markets (SV) Ltd. - [NZDUSDb,H4]</TitleText>
        <WindowButtons>
          <svg width="10" height="10"><path d="M1 5.500h8" stroke="#333" /></svg>
          <svg width="10" height="10" fill="none" stroke="#222" strokeWidth="1.100">
            <rect x="1" y="3" width="6" height="6" rx="1" />
            <path d="M3 2.500q0-1.500 1.500-1.500H7q2 0 2 2v2.500Q9 7 7.500 7" />
          </svg>
          <svg width="10" height="10"><path d="m1 1 8 8M9 1 1 9" stroke="#222" strokeWidth="1.100" /></svg>
        </WindowButtons>
      </TitleBar>
      <MenuBar>
        <MenuItem $w={20}>
          <Ico s={14}>
            <rect x="1" y="1" width="10" height="9" fill="#eaf3fc" stroke="#6c9ac8" />
            <rect x="4" y="5" width="10.500" height="9.500" fill="#eaf3fc" stroke="#5d8cc0" />
            <path d="M4 6.500h10.500" stroke="#5d8cc0" strokeWidth="1.500" />
            <path d="M7 9v4M9.500 8.500v3M12 9.500v4" stroke="#6a94c0" />
          </Ico>
        </MenuItem>
        {MENUS.map(([m, w]) => <MenuItem key={m} $w={w}>{m}</MenuItem>)}
        <MdiButtons>
          <MdiButton><svg width="6" height="6"><path d="M1 4.500h4" stroke="#444" /></svg></MdiButton>
          <MdiButton>
            <svg width="7" height="7" fill="none" stroke="#666" strokeWidth=".9">
              <rect x="1" y="3" width="3.500" height="3" /><path d="M2.500 2.500v-1.500h3.500v3H5" />
            </svg>
          </MdiButton>
          <MdiButton><svg width="6" height="6"><path d="m1 1 4 4M5 1 1 5" stroke="#333" strokeWidth="1.100" /></svg></MdiButton>
        </MdiButtons>
      </MenuBar>

      <ToolbarArea>
        <div>
          <Toolbar $h={22} $bottom>
            <Grip />
            <Slot $w={18}><NewChart /></Slot><Drop $w={8} $r={5} />
            <Slot $w={18}><Profiles /></Slot><Drop $w={9} />
            <Sep $l={5} $r={1} />
            <Slot $w={22}><MarketWatch /></Slot>
            <Slot $w={24}><Target /></Slot>
            <Slot $w={21} $active><FolderStar /></Slot>
            <Slot $w={24}><NavPanel /></Slot>
            <Slot $w={23}><Tester /></Slot>
            <Sep $l={3} $r={3} />
            <Slot $w={16}><OrderIcon /></Slot>
            <ToolLabel $w={53} $l={2}>New Order</ToolLabel>
            <Slot $w={24}><Book /></Slot>
            <Slot $w={22}><CloudUser /></Slot>
            <Slot $w={22}><Signal /></Slot>
            <Slot $w={22}><AutoTrade /></Slot>
            <ToolLabel $w={59}>AutoTrading</ToolLabel>
            <Sep $l={0} $r={0} />
            <Grip />
            <Slot $w={21}><BarsIcon /></Slot>
            <Slot $w={23} $active><CandleIcon /></Slot>
            <Slot $w={23}><LineIcon /></Slot>
            <Sep $l={1} $r={1} />
            <Slot $w={22}><Zoom plus /></Slot>
            <Slot $w={23}><Zoom /></Slot>
            <Slot $w={24}><Tiles /></Slot>
            <Sep $l={1} $r={2} />
            <Slot $w={22} $active><Scroller /></Slot>
            <Slot $w={24}><Shift /></Slot>
            <Sep $l={1} $r={2} />
            <Slot $w={20}><Indicators /></Slot><Drop $w={7} $r={4} />
            <Slot $w={20}><ClockIcon /></Slot><Drop $w={6} $r={6} />
            <Slot $w={20}><Template /></Slot><Drop $w={6} />
            <Sep $l={3} $r={0} />
          </Toolbar>
          <Toolbar $h={23}>
            <Grip />
            <Slot $w={21} $active><Cursor /></Slot>
            <Slot $w={23}><CrossHair /></Slot>
            <Sep $l={1} $r={3} />
            <Slot $w={22.6}><Stroke d="M8 2.500v11" /></Slot>
            <Slot $w={22.6}><Stroke d="M2.500 8h11" /></Slot>
            <Slot $w={22.6}><Stroke d="M2.500 13.500 13.500 2.500" /></Slot>
            <Slot $w={22.6}><Channel /></Slot>
            <Slot $w={22.6}><Fibo /></Slot>
            <Slot $w={22.6}><TextTool>A</TextTool></Slot>
            <Slot $w={22.6}><LabelTool /></Slot>
            <Slot $w={22.6}><BoxTool /></Slot>
            <Slot $w={22}><ArrowsTool /></Slot><Drop $w={6} />
            <Sep $l={3} $r={0} />
            <Grip />
            {PERIODS.map((p) => <Period key={p} $w={22.7} $active={p === "H4"}>{p}</Period>)}
            <Sep $l={0} $r={0} />
          </Toolbar>
        </div>
        <ToolbarRight>
          <Ico s={15}>
            <circle cx="9.500" cy="6" r="3.700" fill="#e6ebfa" stroke="#5a6cb4" strokeWidth="1.500" />
            <path d="m6.500 9-4 4.500" stroke="#4d5da8" strokeWidth="2.400" />
          </Ico>
          <svg width="20" height="18" viewBox="0 0 20 18">
            <path d="M3 15.500 4 12.500A4.500 4 0 1 1 7 13.500z" fill="#f3f3f6" stroke="#a7a7b2" />
            <circle cx="12" cy="7" r="6.700" fill="#cf2a22" />
            <text x="12" y="10.200" textAnchor="middle" fontSize="9" fontWeight="bold" fill="#fff" fontFamily="Open Sans">1</text>
          </svg>
        </ToolbarRight>
      </ToolbarArea>

      <Main>
        <Navigator>
          <NavHeader>
            Navigator
            <svg width="7" height="7"><path d="m1 1 5 5M6 1 1 6" stroke="#111" strokeWidth="1.300" /></svg>
          </NavHeader>
          <NavBody>
            <Guide $w={10} />
            <Guide $w={17} />
            <Tree>
              {INDICATORS.map((n) => <TreeRow key={n}><ScriptIcon />{n}</TreeRow>)}
            </Tree>
            <Scroll />
          </NavBody>
          <NavTabs>
            <NavTab $active>Common</NavTab>
            <NavTab>Favorites</NavTab>
            <Sep $l={0} $r={0} />
          </NavTabs>
        </Navigator>
        <ChartPane>
          <ChartWindow><PriceChart /></ChartWindow>
          <ChartTabs>
            {TABS.map(([t, w], i) => <ChartTab key={t} $w={w} $last={i === TABS.length - 1}>{t}</ChartTab>)}
            <ChartTab $w={80} $active>NZDUSDb,H4</ChartTab>
            <TabFiller>
              <svg width="4" height="6"><path d="M3.500 0v6L.5 3z" fill="#999" /></svg>
              <svg width="4" height="6"><path d="M.5 0v6l3-3z" fill="#999" /></svg>
            </TabFiller>
          </ChartTabs>
        </ChartPane>
      </Main>

      <StatusBar>
        <StatusCell $w={697} $first>For Help, press F1</StatusCell>
        {STATUS.map(([t, w]) => <StatusCell key={t} $w={w}>{t}</StatusCell>)}
        <StatusCell $w={80}>
          <svg width="21" height="12" viewBox="0 0 21 12">
            {[0, 1, 2, 3, 4, 5, 6, 7].map((k) => (
              <g key={k}>
                <rect x={k * 2.65} y="0" width="2" height="11" fill="#8da52c" />
                <rect x={k * 2.65} y={9.5 - k * 0.75} width="2" height={1.5 + k * 0.75} fill="#1c5a86" />
              </g>
            ))}
          </svg>
          487/5 kb
        </StatusCell>
      </StatusBar>

      <Taskbar>
        <Weather>
          <svg width="24" height="24" viewBox="0 0 24 24">
            <defs>
              <linearGradient id="moon" x1="0" y1="0" x2="0" y2="1">
                <stop offset="0" stopColor="#fbb13a" />
                <stop offset="1" stopColor="#ef6c1f" />
              </linearGradient>
            </defs>
            <path d="M7.500 4A8.500 8.500 0 1 0 18 13.500C13 14.500 8 10.500 7.500 4z" fill="url(#moon)" />
            <text x="9.500" y="8.500" fontSize="8.600" fill="#fff" fontFamily="Open Sans">36°</text>
          </svg>
        </Weather>
        <StartButton>
          <svg width="20" height="20">
            <path d="M0 0h9.500v9.500H0zM10.500 0H20v9.500h-9.500zM0 10.500h9.500V20H0zM10.500 10.500H20V20h-9.500z" fill="#45bdf5" />
          </svg>
        </StartButton>
        <SearchBox>
          <svg width="14" height="14" fill="none" stroke="#dedede" strokeWidth="1.500">
            <circle cx="5.700" cy="5.700" r="4.500" /><path d="m9 9 4 4" />
          </svg>
          <span>Search</span>
          <svg width="44" height="22" viewBox="0 0 44 22">
            <clipPath id="pill"><rect y="1" width="44" height="20" rx="10" /></clipPath>
            <g clipPath="url(#pill)">
              <rect width="44" height="22" fill="#f2c766" />
              <circle cx="10" cy="7" r="3" fill="#ffe9a8" />
              <path d="M0 13q10-4 20 0t24-1v10H0z" fill="#4fa3a0" />
              <path d="M12 12q6-4 14-4 8 1 12 6-12 4-26-2z" fill="#24584c" />
              <path d="M17 3v8M22 1v9M27 4v5" stroke="#2c5d45" strokeWidth="2" />
              <path d="M8 18q14-5 34 0v4H8z" fill="#e4c27a" />
            </g>
            <circle cx="33" cy="11" r="10" fill="none" stroke="#5b5130" strokeWidth="1.500" />
          </svg>
        </SearchBox>
        <TaskApp><TaskView /></TaskApp>
        <TaskApp $dot><Explorer /></TaskApp>
        <TaskApp><Snip /></TaskApp>
        <TaskApp><Copilot /></TaskApp>
        <TaskApp $dot><Edge /></TaskApp>
        <TaskApp $dot><Chrome /></TaskApp>
        <TaskApp><Store /></TaskApp>
        <TaskApp><Calc /></TaskApp>
        <TaskApp><FaWhatsapp size={22} color="#2fd566" /></TaskApp>
        <TaskApp><Telegram /></TaskApp>
        <TaskApp $dot><Notepad /></TaskApp>
        <TaskApp><Keyboard /></TaskApp>
        <TaskApp><Clapper /></TaskApp>
        <TaskApp $dot><Obs /></TaskApp>
        <TaskApp $active><HfmTile>HF<i>M</i></HfmTile></TaskApp>
        <Tray>
          <TraySlot $w={26}><svg width="10" height="6" fill="none"><path d="m1 5 4-4 4 4" stroke="#fff" strokeWidth="1.500" /></svg></TraySlot>
          <TraySlot $w={28}>
            <svg width="14" height="11" viewBox="0 0 14 11"><path d="M3.500 10a3 3 0 0 1-.3-6 4 4 0 0 1 7.300-.2A3.200 3.200 0 0 1 10.500 10z" fill="#d4d4d4" /><path d="M4 4.500q3 0 6.500 5.500H3.500z" fill="#f3f3f3" /></svg>
          </TraySlot>
          <TraySlot $w={25}>
            <svg width="10" height="14" fill="none" stroke="#6cc9c0" strokeWidth="1.200"><rect x="3" y="1" width="4" height="7.500" rx="2" fill="#2c6f6c" /><path d="M1 6.500a4 4 0 0 0 8 0M5 10.500V13" /></svg>
          </TraySlot>
          <TraySlot $w={28}>
            <svg width="15" height="14" fill="none" stroke="#e8e8e8" strokeWidth="1.200">
              <circle cx="6.500" cy="6.500" r="5.300" /><path d="M4.500 3.500v2M8.500 3.500v2M3.500 7.500q3 3 6 0" />
              <circle cx="11" cy="10" r="3.500" fill="#f2f2f2" stroke="none" /><path d="M11 8.200v3.600M9.200 10h3.600" stroke="#222" />
            </svg>
          </TraySlot>
          <TraySlot $w={24}>
            <svg width="14" height="12" fill="none" stroke="#eee" strokeWidth="1.200">
              <path d="M.8 4.500a8.800 8.800 0 0 1 12.400 0M2.800 6.700a6 6 0 0 1 8.400 0M4.700 8.700a3.300 3.300 0 0 1 4.600 0" /><circle cx="7" cy="10.500" r=".8" fill="#eee" />
            </svg>
          </TraySlot>
          <TraySlot $w={17}>
            <svg width="14" height="12" fill="none" stroke="#eee" strokeWidth="1.100">
              <path d="M1 4.200h2.200L6.500 1.500v9L3.200 7.800H1zM8.300 4a3 3 0 0 1 0 4M10.200 2.700a5 5 0 0 1 0 6.600M12 1.300a7 7 0 0 1 0 9.400" />
            </svg>
          </TraySlot>
          <TraySlot $w={26}>
            <svg width="18" height="13" viewBox="0 0 18 13">
              <rect x="1" y="2.500" width="14" height="9" rx="2" fill="#a7dca5" stroke="#d9efd8" />
              <path d="M16.500 5.500v3" stroke="#d9efd8" strokeWidth="1.500" />
              <path d="m8.500 0-2.500 4.500h4zM7.500 4h1.500v4H7.500z" fill="#fff" stroke="#2c4a2c" strokeWidth=".5" />
            </svg>
          </TraySlot>
          <Clock>4:39 PM<br />3/15/2026</Clock>
          <svg width="13" height="14" viewBox="0 0 13 14">
            <path d="M2 10V6a4 4 0 0 1 8 0v4l1 1.500H1z" fill="#eee" />
            <path d="M4.500 12a1.600 1.600 0 0 0 3 0z" fill="#eee" />
            <path d="M5 5h2.500L5 8h2.500" stroke="#222" fill="none" />
            <path d="M9.500 1h2.500L9.500 4H12" stroke="#eee" fill="none" />
          </svg>
        </Tray>
      </Taskbar>
    </Screen>
  );
}
